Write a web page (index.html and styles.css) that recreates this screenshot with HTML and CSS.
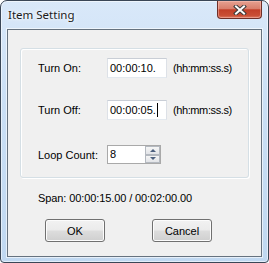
FILE: index.html
```html
<!DOCTYPE html>
<html lang="en">
<head>
    <meta charset="UTF-8">
    <title>Item Setting</title>
    <link rel="stylesheet" href="styles.css">
</head>
<body>
    <div class="window">
        <div class="titlebar">
            <span class="title">Item Setting</span>
            <div class="close">
                <svg width="14" height="10" viewBox="0 0 14 10">
                    <path d="M3 1.5 L11 8.5 M11 1.5 L3 8.5" stroke="#3b3b3b" stroke-width="4" stroke-linecap="square" fill="none"/>
                    <path d="M3 1.5 L11 8.5 M11 1.5 L3 8.5" stroke="#fff" stroke-width="2" stroke-linecap="square" fill="none"/>
                </svg>
            </div>
        </div>
        <div class="client">
            <div class="group">
                <div class="row">
                    <span class="label">Turn On:</span>
                    <div class="textbox">00:00:10.</div>
                    <span class="hint">(hh:mm:ss.s)</span>
                </div>
                <div class="row row-second">
                    <span class="label">Turn Off:</span>
                    <div class="textbox">00:00:05.<span class="caret"></span></div>
                    <span class="hint">(hh:mm:ss.s)</span>
                </div>
                <div class="row row-third">
                    <span class="label">Loop Count:</span>
                    <div class="spin">
                        <span class="spin-value">8</span>
                        <div class="spin-buttons">
                            <div class="spin-btn"><span class="arrow-up"></span></div>
                            <div class="spin-btn"><span class="arrow-down"></span></div>
                        </div>
                    </div>
                </div>
            </div>
            <div class="span-text">Span: 00:00:15.00 / 00:02:00.00</div>
            <div class="actions">
                <div class="button">OK</div>
                <div class="button">Cancel</div>
            </div>
        </div>
    </div>
</body>
</html>
```

FILE: styles.css
```css
body {
    margin: 0;
    padding: 0;
    background-color: #fff;
    font-family: "Liberation Sans", Arial, sans-serif;
    font-size: 11px;
    color: #000;
}

.window {
    width: 269px;
    height: 263px;
    box-sizing: border-box;
    border: 1px solid #3a4656;
    border-radius: 7px 7px 4px 4px;
    padding: 0 6px 5px 6px;
    background: linear-gradient(180deg, #d9e8f9 0%, #cadff5 40%, #c0d8f1 100%);
    box-shadow: inset 0 0 0 1px rgba(255, 255, 255, 0.55);
    display: flex;
    flex-direction: column;
}

.titlebar {
    height: 28px;
    display: flex;
    justify-content: space-between;
    align-items: flex-start;
}

.title {
    font-family: "Noto Sans", "DejaVu Sans", sans-serif;
    font-size: 11.5px;
    margin: 6px 0 0 1px;
    color: #1b1b1b;
    text-shadow: 0 0 6px #fff, 0 0 3px #fff;
}

.close {
    width: 45px;
    height: 18px;
    box-sizing: border-box;
    border: 1px solid #6e2f28;
    border-top: none;
    border-radius: 0 0 4px 4px;
    background: linear-gradient(180deg, #e6a191 0%, #d97f6c 45%, #c23f28 52%, #c94e35 85%, #db7a62 100%);
    box-shadow: inset 0 0 0 1px rgba(255, 200, 190, 0.45);
    display: flex;
    justify-content: center;
    align-items: center;
}

.client {
    height: 228px;
    box-sizing: border-box;
    border: 1px solid #66727f;
    background-color: #f0f0f0;
    box-shadow: 0 0 0 1px rgba(255, 255, 255, 0.6);
    padding: 18px 12px 0 12px;
}

.group {
    height: 130px;
    box-sizing: border-box;
    border: 1px solid #d5dfe5;
    border-radius: 3px;
    box-shadow: inset 1px 1px 0 #fff, 1px 1px 0 #fff;
    padding: 9px 0 0 17px;
}

.row {
    display: flex;
    align-items: center;
    height: 20px;
}

.row-second {
    margin-top: 22px;
}

.row-third {
    margin-top: 25px;
    height: 19px;
}

.label {
    width: 69px;
}

.textbox {
    width: 60px;
    height: 20px;
    box-sizing: border-box;
    background-color: #fff;
    border: 1px solid;
    border-color: #c9ced6 #dde1e7 #e3e9ef #dde1e7;
    padding-left: 2px;
    line-height: 18px;
    display: flex;
    align-items: center;
}

.caret {
    width: 1px;
    height: 14px;
    background-color: #000;
    margin-left: 1px;
}

/* the original face is narrower than Arial here */
.hint {
    margin-left: 6px;
    letter-spacing: -0.4px;
}

.spin {
    width: 54px;
    height: 19px;
    box-sizing: border-box;
    background-color: #fff;
    border: 1px solid #a9a9a9;
    display: flex;
    justify-content: space-between;
}

.spin-value {
    padding-left: 2px;
    line-height: 17px;
}

.spin-buttons {
    width: 15px;
    display: flex;
    flex-direction: column;
}

.spin-btn {
    flex: 1;
    box-sizing: border-box;
    border: 1px solid #b4b9c0;
    background: linear-gradient(180deg, #f6f6f6, #e2e4e8);
    display: flex;
    justify-content: center;
    align-items: center;
}

.arrow-up {
    width: 0;
    height: 0;
    border-left: 3px solid transparent;
    border-right: 3px solid transparent;
    border-bottom: 3px solid #4c607f;
}

.arrow-down {
    width: 0;
    height: 0;
    border-left: 3px solid transparent;
    border-right: 3px solid transparent;
    border-top: 3px solid #4c607f;
}

.span-text {
    margin: 14px 0 0 18px;
    line-height: 13px;
    letter-spacing: -0.1px;
}

.actions {
    display: flex;
    margin: 14px 0 0 25px;
    gap: 47px;
}

.button {
    width: 60px;
    height: 23px;
    box-sizing: border-box;
    border: 1px solid #707070;
    border-radius: 3px;
    background: linear-gradient(180deg, #f2f2f2 0%, #ebebeb 48%, #dddddd 52%, #cfcfcf 100%);
    box-shadow: inset 0 0 0 1px #fcfcfc;
    display: flex;
    justify-content: center;
    align-items: center;
}
```
